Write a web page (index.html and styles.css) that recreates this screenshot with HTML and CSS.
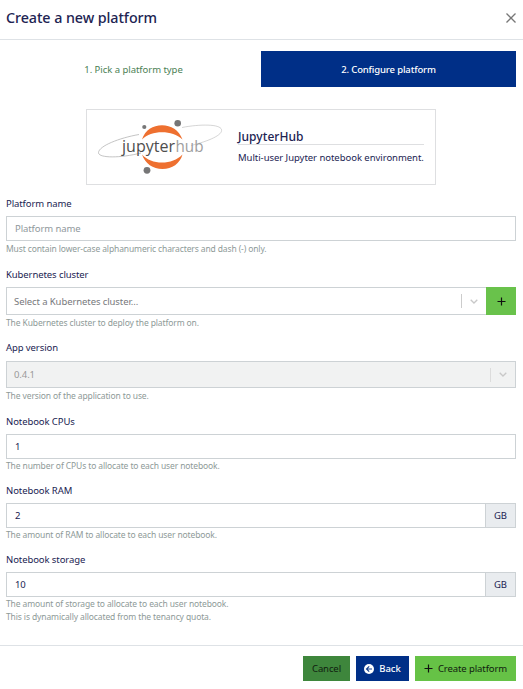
FILE: index.html
```html
<!DOCTYPE html>
<html lang="en">
<head>
<meta charset="utf-8">
<title>Create a new platform</title>
<link rel="stylesheet" href="styles.css">
</head>
<body>
<div class="modal">
  <header class="modal-header">
    <h1 class="title">Create a new platform</h1>
    <svg class="close" viewBox="0 0 10 10" role="img" aria-label="Close"><path d="M.5.5l9 9M9.500.5l-9 9"/></svg>
  </header>
  <main class="modal-body">
    <nav class="steps">
      <span class="step step-done">1. Pick a platform type</span>
      <span class="step step-active">2. Configure platform</span>
    </nav>
    <section class="card">
      <svg class="logo" viewBox="0 0 126 58" role="img" aria-label="jupyterhub">
        <g class="orbit">
          <path d="M42 17.500C22 21 2 29 1.500 35.500C1 41 22 41.500 44 36"/>
          <path class="thin" d="M85 10.500C103 7 123 7 124.500 12.500C126 18 112 24 94 28.500"/>
        </g>
        <path class="arc" d="M45 22.500C48 13 56 8.200 65 8.200S82 13 85.500 22.500C80 17.500 73 15.300 65 15.300S50 17.500 45 22.500Z"/>
        <path class="arc" d="M45 37.500C50 43 57 45.500 65 45.500S80 43 85.500 37.500C83 46.500 75 52 65.500 52S48 46.500 45 37.500Z"/>
        <circle class="moon" cx="80.700" cy="6.300" r="3.300"/>
        <circle class="moon" cx="47.300" cy="10" r="2.100"/>
        <circle class="moon" cx="50" cy="53.300" r="3.400"/>
        <text class="word" x="25" y="34.500" textLength="53" lengthAdjust="spacingAndGlyphs">jupyter</text>
        <text class="word hub" x="78.500" y="34.500" textLength="28" lengthAdjust="spacingAndGlyphs">hub</text>
      </svg>
      <div class="card-text">
        <h2 class="card-title">JupyterHub</h2>
        <p class="card-desc">Multi-user Jupyter notebook environment.</p>
      </div>
    </section>
    <form class="form">
      <div class="group roomy">
        <label class="label">Platform name</label>
        <div class="control"><span class="value placeholder">Platform name</span></div>
        <p class="help">Must contain lower-case alphanumeric characters and dash (-) only.</p>
      </div>
      <div class="group roomy">
        <label class="label">Kubernetes cluster</label>
        <div class="control select tall">
          <span class="value select-hint">Select a Kubernetes cluster...</span>
          <span class="caret"><svg viewBox="0 0 8 5"><path d="M.7.700L4 4L7.300.700"/></svg></span>
          <span class="add"><svg viewBox="0 0 9 9"><path d="M4.500.500v8M.5 4.500h8"/></svg></span>
        </div>
        <p class="help">The Kubernetes cluster to deploy the platform on.</p>
      </div>
      <div class="group roomy">
        <label class="label raised">App version</label>
        <div class="control select disabled">
          <span class="value">0.4.1</span>
          <span class="caret"><svg viewBox="0 0 8 5"><path d="M.7.700L4 4L7.300.700"/></svg></span>
        </div>
        <p class="help">The version of the application to use.</p>
      </div>
      <div class="group">
        <label class="label">Notebook CPUs</label>
        <div class="control"><span class="value">1</span></div>
        <p class="help">The number of CPUs to allocate to each user notebook.</p>
      </div>
      <div class="group">
        <label class="label">Notebook RAM</label>
        <div class="control"><span class="value">2</span><span class="unit">GB</span></div>
        <p class="help">The amount of RAM to allocate to each user notebook.</p>
      </div>
      <div class="group">
        <label class="label">Notebook storage</label>
        <div class="control"><span class="value">10</span><span class="unit">GB</span></div>
        <p class="help">The amount of storage to allocate to each user notebook.<br>This is dynamically allocated from the tenancy quota.</p>
      </div>
    </form>
  </main>
  <footer class="modal-footer">
    <button class="btn cancel">Cancel</button>
    <button class="btn back"><svg class="icon-back" viewBox="0 0 10 10"><circle cx="5" cy="5" r="5"/><path d="M8 5H2.800M5.200 2.300L2.500 5l2.700 2.700"/></svg>Back</button>
    <button class="btn create"><svg class="icon-plus" viewBox="0 0 9 9"><path d="M4.500.500v8M.5 4.500h8"/></svg>Create platform</button>
  </footer>
</div>
</body>
</html>
```

FILE: styles.css
```css
* { box-sizing: border-box; }
body, h1, h2, p { margin: 0; font-weight: 400; }
body {
  width: 523px;
  height: 689px;
  overflow: hidden;
  background: #fff;
  color: #212352;
  font-family: "Noto Sans", sans-serif;
  font-size: 9.5px;
  letter-spacing: -.09px;
}
svg { display: block; fill: none; overflow: visible; }
.modal { display: flex; flex-direction: column; height: 689px; }
.modal-header {
  display: flex;
  align-items: center;
  justify-content: space-between;
  height: 40px;
  padding: 0 7px 4px 6px;
  border-bottom: 1px solid #dee2e6;
}
.title { font-size: 14.3px; font-weight: 500; line-height: 20px; letter-spacing: -.07px; }
.close { width: 10px; height: 10px; stroke: #777; stroke-width: 1.3; }
.modal-body { flex: none; height: 605px; padding: 11px 7px 0 6px; }
.steps { display: grid; grid-template-columns: 1fr 1fr; height: 36px; }
.step { display: flex; align-items: center; justify-content: center; }
.step-done { color: #4b7f55; letter-spacing: -.04px; }
.step-active { background: #002f87; color: #fff; font-weight: 500; letter-spacing: -.14px; }
.card {
  display: flex;
  width: 350px;
  height: 76px;
  margin: 22px auto 0 80px;
  border: 1px solid #dedfe1;
}
.logo { width: 126px; height: 58px; margin: 7px 0 0 10px; flex: none; }
.orbit { stroke: #aaa; stroke-width: .7; }
.thin { stroke-width: .5; }
.arc { fill: #ee7030; }
.moon { fill: #767677; }
.word { fill: #4e4e4e; font-family: "Open Sans", sans-serif; font-size: 15.7px; letter-spacing: 0; }
.hub { fill: #9e9e9e; }
.card-text { width: 186px; margin: 18px 0 0 15px; }
.card-title { height: 17px; border-bottom: 1px solid #dedfe1; font-size: 12px; font-weight: 500; line-height: 17px; letter-spacing: .05px; }
.card-desc { margin-top: 6px; line-height: 14px; letter-spacing: -.04px; white-space: nowrap; }
.form { margin-top: 11px; }
.group { margin-bottom: 11px; }
.label { display: block; height: 20px; line-height: 15px; }
.raised { line-height: 14px; }
.control { display: flex; align-items: center; height: 25px; border: 1px solid #cdd2d5; }
.value { flex: 1; padding-left: 8px; }
.placeholder { color: #8f989b; }
.help { color: #8e9a98; font-size: 8.5px; line-height: 13px; letter-spacing: -.12px; white-space: nowrap; }
.roomy { margin-bottom: 12px; }
.roomy .help { padding-top: 1px; }
.select .value { padding-left: 7px; }
.select-hint { color: #77797c; }
.tall { height: 28px; }
.disabled { height: 27px; background: #f1f2f2; color: #999; }
.caret {
  display: flex;
  align-items: center;
  justify-content: center;
  width: 25px;
  height: 14px;
  border-left: 1px solid #ccc;
}
.disabled .caret { border-color: #dcdcdc; }
.caret svg { width: 8px; height: 5px; stroke: #c8c8c8; stroke-width: 1.3; }
.add {
  display: flex;
  align-items: center;
  justify-content: center;
  width: 30px;
  height: 28px;
  margin-right: -1px;
  background: #69c24b;
}
.add svg { width: 9px; height: 9px; stroke: #111; stroke-width: 1.2; }
.unit {
  display: flex;
  align-items: center;
  justify-content: center;
  width: 30px;
  height: 23px;
  border-left: 1px solid #cdd2d5;
  background: #e9ecef;
}
.modal-footer {
  display: flex;
  justify-content: flex-end;
  gap: 6px;
  padding: 10px 7px 0 0;
  border-top: 1px solid #dee2e6;
}
.btn {
  display: flex;
  align-items: center;
  justify-content: center;
  gap: 5px;
  height: 25px;
  padding: 0;
  border: 0;
  color: #10200f;
  font: 9.5px "Noto Sans", sans-serif;
  letter-spacing: -.09px;
}
.cancel { width: 47px; background: #3e863c; }
.back { width: 53px; background: #002f87; color: #fff; font-weight: 500; }
.create { width: 101px; background: #66c246; }
.icon-back { width: 10px; height: 10px; }
.icon-back circle { fill: #fff; }
.icon-back path { stroke: #16418f; stroke-width: 1.2; }
.icon-plus { width: 9px; height: 9px; stroke: #111; stroke-width: 1.2; }
```
